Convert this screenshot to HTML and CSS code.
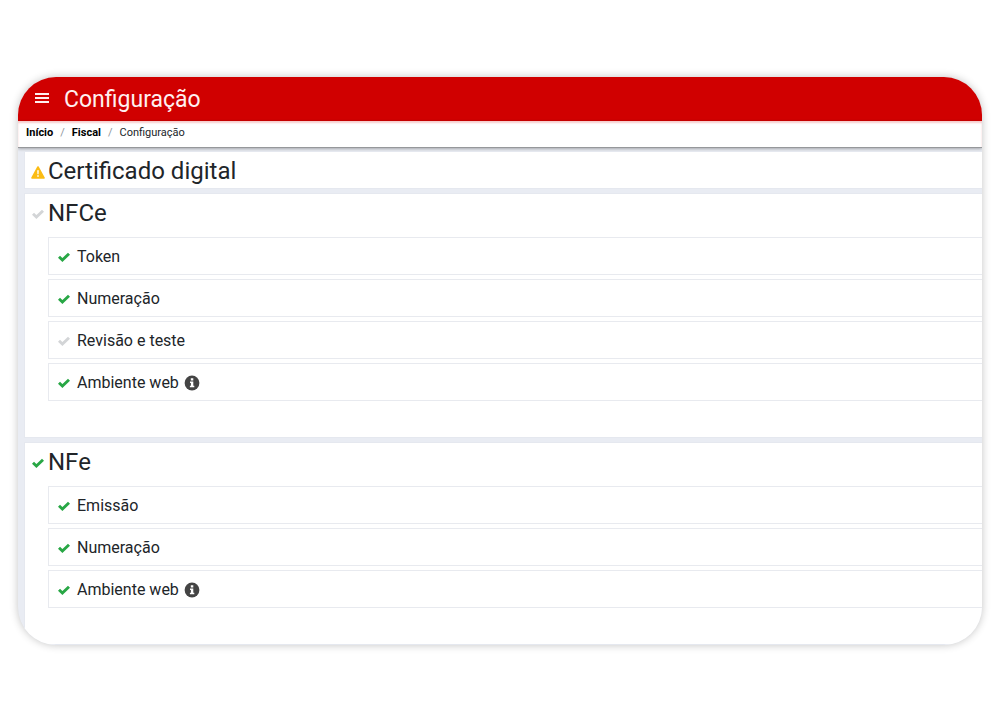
FILE: index.html
```html
<!DOCTYPE html>
<html lang="pt-BR">

<head>
    <meta charset="UTF-8">
    <meta name="viewport" content="width=device-width, initial-scale=1.0">
    <title>Configuração</title>
    <link rel="stylesheet" href="styles.css">
</head>

<body>
    <svg class="symbols" aria-hidden="true">
        <symbol id="check" viewBox="0 0 12 10">
            <path d="M1 4.7 4.4 8 11 1.7" fill="none" stroke="currentColor" stroke-width="2.9" />
        </symbol>
        <symbol id="info" viewBox="0 0 16 16">
            <circle cx="8" cy="8" r="7.4" fill="currentColor" />
            <path d="M6.8 3.2h2.5v2.3H6.8zM6 6.5h3.3v4.2h1v1.6H5.9v-1.6h1V8.1H6z" fill="#fff" />
        </symbol>
    </svg>

    <div class="app">
        <header class="topbar">
            <button class="menu-button" type="button" aria-label="Menu">
                <svg width="14" height="10" viewBox="0 0 14 10">
                    <path d="M0 1h14M0 5h14M0 9h14" stroke="currentColor" stroke-width="1.9" />
                </svg>
            </button>
            <h1>Configuração</h1>
        </header>

        <nav class="breadcrumb">
            <a href="#">Início</a>
            <span class="separator">/</span>
            <a href="#">Fiscal</a>
            <span class="separator">/</span>
            <span>Configuração</span>
        </nav>

        <main class="content">
            <section class="card">
                <div class="card-title">
                    <svg class="warning" viewBox="0 0 14 13">
                        <path d="M7 1 13 12H1z" fill="currentColor" stroke="currentColor" stroke-width="1.6" stroke-linejoin="round" />
                        <path d="M6.2 4.2h1.6L7.6 8.3H6.4zM6.2 9.2h1.6v1.6H6.2z" fill="#fff" />
                    </svg>
                    <h2>Certificado digital</h2>
                </div>
            </section>

            <section class="card">
                <div class="card-title">
                    <svg class="check pending"><use href="#check" /></svg>
                    <h2>NFCe</h2>
                </div>
                <ul class="steps">
                    <li><svg class="check"><use href="#check" /></svg>Token</li>
                    <li><svg class="check"><use href="#check" /></svg>Numeração</li>
                    <li><svg class="check pending"><use href="#check" /></svg>Revisão e teste</li>
                    <li><svg class="check"><use href="#check" /></svg>Ambiente web<svg class="info"><use href="#info" /></svg></li>
                </ul>
            </section>

            <section class="card">
                <div class="card-title">
                    <svg class="check"><use href="#check" /></svg>
                    <h2>NFe</h2>
                </div>
                <ul class="steps">
                    <li><svg class="check"><use href="#check" /></svg>Emissão</li>
                    <li><svg class="check"><use href="#check" /></svg>Numeração</li>
                    <li><svg class="check"><use href="#check" /></svg>Ambiente web<svg class="info"><use href="#info" /></svg></li>
                </ul>
            </section>
        </main>
    </div>
</body>

</html>
```
FILE: styles.css
```css
* {
    margin: 0;
    padding: 0;
    box-sizing: border-box;
}

body {
    font-family: Roboto, "Liberation Sans", sans-serif;
    background-color: #fff;
    color: #212529;
}

.symbols {
    display: none;
}

.app {
    margin: 77px 18px;
    background-color: #e9ecf3;
    border-radius: 38px;
    overflow: hidden;
    box-shadow: 0 0 8px rgba(0, 0, 0, 0.24);
}

.topbar {
    display: flex;
    align-items: center;
    gap: 15px;
    height: 44px;
    padding-left: 17px;
    background-color: #d00000;
    color: #fff0f0;
}

.topbar h1 {
    font-size: 23px;
    font-weight: 400;
}

.menu-button {
    display: flex;
    margin-bottom: 2px;
    border: none;
    background: none;
    color: inherit;
    cursor: pointer;
}

.breadcrumb {
    display: flex;
    gap: 7px;
    height: 27px;
    padding: 4px 8px;
    background-color: #fff;
    border-bottom: 1px solid #96989b;
    box-shadow: inset 0 2px 2px rgba(208, 0, 0, 0.2), 0 1px 3px rgba(0, 0, 0, 0.3);
    font-size: 11px;
    line-height: 15px;
    color: #212529;
}

.breadcrumb a {
    color: #000;
    font-weight: 700;
    text-decoration: none;
}

.separator {
    color: #8d949b;
}

.content {
    display: flex;
    flex-direction: column;
    gap: 4px;
    padding: 3px 0 0 6px;
}

.card {
    padding-left: 6px;
    background-color: #fff;
    border: 1px solid #e5e8ef;
    border-right: none;
}

.card-title {
    display: flex;
    align-items: center;
    gap: 3px;
    height: 36px;
    padding-top: 2px;
}

.card-title h2 {
    font-size: 24px;
    font-weight: 400;
}

.card-title svg {
    margin-top: 2px;
}

.card-title .check {
    margin: 2px 1px 0;
}

.steps {
    display: flex;
    flex-direction: column;
    gap: 4px;
    padding: 7px 0 36px 17px;
    list-style: none;
}

.steps li {
    display: flex;
    align-items: center;
    height: 38px;
    padding-left: 9px;
    border: 1px solid #e8eaef;
    border-right: none;
    font-size: 16px;
}

.check {
    width: 12px;
    height: 10px;
    color: #28a745;
}

.steps svg {
    margin-top: 2px;
}

.steps .check {
    margin-right: 7px;
}

.check.pending {
    color: #d3d5d7;
}

.warning {
    width: 14px;
    height: 13px;
    color: #fbbc14;
}

.info {
    width: 16px;
    height: 16px;
    margin-left: 5px;
    color: #444;
}
```
